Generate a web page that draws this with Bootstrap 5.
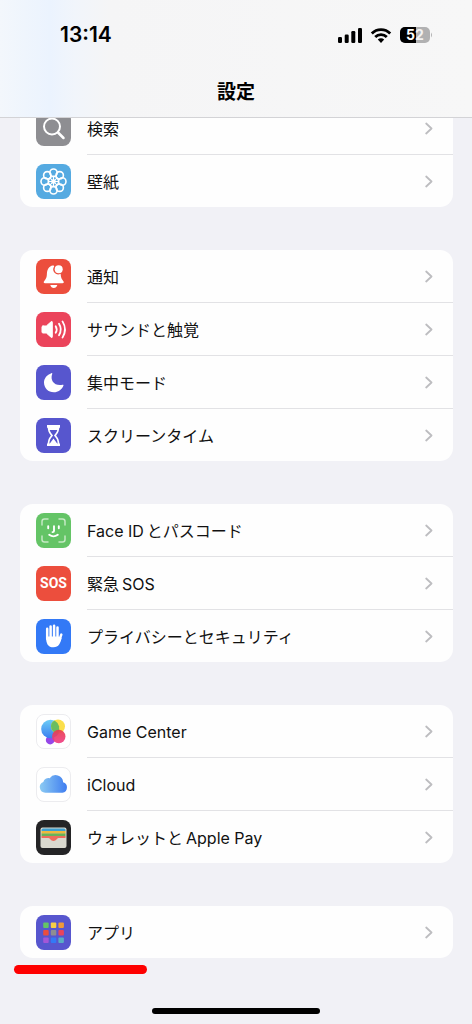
<!DOCTYPE html>
<html lang="ja">
<head>
<meta charset="utf-8">
<meta name="viewport" content="width=device-width, initial-scale=1">
<title>設定</title>
<link href="https://cdn.jsdelivr.net/npm/bootstrap@5.3.0/dist/css/bootstrap.min.css" rel="stylesheet">
<style>
  body { background: #f1f1f6; color: #111; font-family: Inter, "Noto Sans CJK JP", sans-serif; font-size: 16px; line-height: 24px; }
  .top-bar { height: 118px; border-bottom: 1px solid #d3d3d6; background: linear-gradient(90deg, #f3f7fc 0, #ebf3fe 50px, #f1f5fb 75px, #f5f5f6 110px, #f7f7f7 100%); }
  .status-row { height: 70px; padding: 0 40px 0 60px; }
  .clock { font-size: 21px; font-weight: 600; color: #000; }
  .page-title { font-size: 19px; font-weight: 700; line-height: 46px; color: #000; margin: 0; }
  .settings { padding: 102px 19px 65px 20px; display: grid; gap: 43px; }
  .group-box { border-radius: 13px; background: #fefefe; overflow: hidden; }
  .setting-row { padding: 0 0 0 16px; gap: 16px; height: 53px; color: #111; text-decoration: none; }
  .setting-row:last-child { height: 52px; }
  .row-body { align-self: stretch; border-bottom: 1px solid #e2e2e5; padding-right: 20px; }
  .setting-row:last-child .row-body { border-bottom: 0; }
  .label-text { padding-top: 2px; }
  .mixed { display: flex; gap: 3px; }
  .tile { width: 35px; height: 35px; border-radius: 8px; overflow: hidden; flex: none; color: #fff; }
  .tile svg { display: block; width: 35px; height: 35px; }
  .gray { background: #8e8e92; } .sky { background: #55aae1; } .red { background: #ec4e3d; }
  .pink { background: #eb445b; } .indigo { background: #5756ce; } .green { background: #64c466; }
  .blue { background: #3379f6; } .plain { background: #fff; border: 1px solid #ececef; }
  .plain svg { margin: -1px; } .dark { background: #242426; }
  .sos { font: 700 14px/35px "Liberation Sans Narrow", Roboto, sans-serif; text-align: center; }
  .marker { left: 14px; bottom: 49px; width: 133px; height: 9px; background: #fe0000; border-radius: 5px; }
  .home-bar { width: 168px; height: 6px; bottom: 10px; background: #000; border-radius: 3px; }
</style>
</head>
<body>
<svg width="0" height="0" class="position-absolute" aria-hidden="true">
  <symbol id="chev" viewBox="0 0 8 13"><path d="M1.200 1.500 6.500 6.500 1.200 11.500" fill="none" stroke="#bdbdc0" stroke-width="1.800" stroke-linecap="round" stroke-linejoin="round"/></symbol>
</svg>

<header class="top-bar fixed-top">
  <div class="status-row d-flex align-items-center justify-content-between">
    <span class="clock">13:14</span>
    <svg width="94" height="18" viewBox="0 0 94 18" role="img" aria-label="電波 Wi-Fi バッテリー">
      <rect x="0" y="11" width="4" height="6" rx="1.2"/><rect x="6.7" y="8.5" width="4" height="8.5" rx="1.2"/><rect x="13.3" y="5" width="4" height="12" rx="1.2"/><rect x="20" y="2" width="4" height="15" rx="1.2"/>
      <g fill="none" stroke="#000" stroke-width="2.8"><path d="M33.8 7.4a13 13 0 0 1 18.4 0"/><path d="M37.2 11a8.2 8.2 0 0 1 11.600 0"/></g>
      <path d="M39.8 13.600a4.600 4.600 0 0 1 6.400 0L43 16.900z"/>
      <rect x="62" y="1" width="30" height="16" rx="5" fill="#b1b1b2"/><path d="M67 1h11v16H67a5 5 0 0 1-5-5V6a5 5 0 0 1 5-5z"/><path d="M93 6.500q2 2.500 0 5z" fill="#b1b1b2"/>
      <text x="68" y="14" font-size="14" font-weight="700" fill="#fff">5<tspan fill="#f2f2f2">2</tspan></text>
    </svg>
  </div>
  <h1 class="page-title text-center">設定</h1>
</header>

<main class="settings">
  <nav class="group-box" aria-label="検索と壁紙">
    <a href="#search" class="setting-row d-flex align-items-center">
      <span class="tile gray"><svg viewBox="0 0 35 35" fill="none" stroke="#fff" stroke-width="2" stroke-linecap="round"><circle cx="16" cy="15.500" r="8"/><path d="m22 21.500 5.500 5.500" stroke-width="2.500"/></svg></span>
      <span class="row-body d-flex align-items-center justify-content-between flex-fill"><span class="label-text">検索</span><svg width="8" height="13"><use href="#chev"/></svg></span>
    </a>
    <a href="#wallpaper" class="setting-row d-flex align-items-center">
      <span class="tile sky"><svg viewBox="0 0 35 35" fill="none" stroke="#fff" stroke-width="1.600"><circle cx="17.500" cy="8.700" r="3.700"/><circle cx="23.700" cy="11.300" r="3.700"/><circle cx="26.300" cy="17.500" r="3.700"/><circle cx="23.700" cy="23.700" r="3.700"/><circle cx="17.500" cy="26.300" r="3.700"/><circle cx="11.300" cy="23.700" r="3.700"/><circle cx="8.700" cy="17.500" r="3.700"/><circle cx="11.300" cy="11.300" r="3.700"/><circle cx="17.500" cy="17.500" r="5" stroke-width="1.200"/><circle cx="17.500" cy="17.500" r="1.500" fill="#fff"/><path stroke-width="1.100" d="M17.500 12v11M12 17.500h11M13.600 13.600l7.800 7.800M21.400 13.600l-7.800 7.800"/></svg></span>
      <span class="row-body d-flex align-items-center justify-content-between flex-fill"><span class="label-text">壁紙</span><svg width="8" height="13"><use href="#chev"/></svg></span>
    </a>
  </nav>

  <nav class="group-box" aria-label="通知とサウンド">
    <a href="#notifications" class="setting-row d-flex align-items-center">
      <span class="tile red"><svg viewBox="0 0 35 35" fill="#fff"><path d="M16.800 6.400c-3.800.6-5.800 4-5.900 8.200-.1 4.200-1 5.600-2.600 7.300-1 1.100-.8 2.300.8 2.300h17.300c1.600 0 1.800-1.200.8-2.300-1.500-1.600-2.300-3.200-2.600-7.100a5 5 0 0 1-6.400-7.300c0-.8-.5-1.200-1.400-1.100z"/><circle cx="22.700" cy="10.200" r="4"/><path d="M14.300 25.900h7q-.8 3-3.500 3t-3.500-3z"/></svg></span>
      <span class="row-body d-flex align-items-center justify-content-between flex-fill"><span class="label-text">通知</span><svg width="8" height="13"><use href="#chev"/></svg></span>
    </a>
    <a href="#sounds" class="setting-row d-flex align-items-center">
      <span class="tile pink"><svg viewBox="0 0 35 35" fill="none" stroke="#fff" stroke-width="1.800" stroke-linecap="round"><path d="M7 14h3.300l5-4.400q1-.6 1 .6v14.600q0 1.200-1 .6l-5-4.400H7q-1 0-1-1v-5q0-1 1-1z" fill="#fff" stroke-width="1"/><path d="M19.700 14.200q2 3.300 0 6.600M23 11.800q3.600 5.700 0 11.400M26.500 9.400q5 8.100 0 16.200"/></svg></span>
      <span class="row-body d-flex align-items-center justify-content-between flex-fill"><span class="label-text">サウンドと触覚</span><svg width="8" height="13"><use href="#chev"/></svg></span>
    </a>
    <a href="#focus" class="setting-row d-flex align-items-center">
      <span class="tile indigo"><svg viewBox="0 0 35 35" fill="#fff"><path d="M15.400 8.200c.6-.3 1.100.2.800.8-2.400 6.500 2.400 12.500 10.300 10.800.8-.2 1.200.3.900 1-1.700 4-5.300 6.500-9.500 6.500C12.200 27.300 8 23 8 17.500c0-4.200 3-7.900 7.400-9.300z"/></svg></span>
      <span class="row-body d-flex align-items-center justify-content-between flex-fill"><span class="label-text">集中モード</span><svg width="8" height="13"><use href="#chev"/></svg></span>
    </a>
    <a href="#screen-time" class="setting-row d-flex align-items-center">
      <span class="tile indigo"><svg viewBox="0 0 35 35"><path d="M12.500 8.200h10c0 5-1 6-3.500 9.300 2.500 3.300 3.500 4.300 3.500 9.300h-10c0-5 1-6 3.500-9.300-2.500-3.300-3.500-4.300-3.500-9.300z" fill="#5756ce" stroke="#fff" stroke-width="1.700"/><path d="M11 7h13v2.700H11zM11 25.400h13V28H11zM12.500 9h10v3h-10zM17.500 20.500l4 5.500h-8z" fill="#fff"/></svg></span>
      <span class="row-body d-flex align-items-center justify-content-between flex-fill"><span class="label-text">スクリーンタイム</span><svg width="8" height="13"><use href="#chev"/></svg></span>
    </a>
  </nav>

  <nav class="group-box" aria-label="セキュリティ">
    <a href="#face-id" class="setting-row d-flex align-items-center">
      <span class="tile green"><svg viewBox="0 0 35 35" fill="none" stroke="#fff" stroke-linecap="round"><path stroke="#c5e9c4" stroke-width="1.500" d="M6 12V8.500Q6 6 8.500 6H12M23 6h3.500Q29 6 29 8.500V12M29 23v3.500q0 2.500-2.500 2.500H23M12 29H8.500Q6 29 6 26.500V23"/><path stroke-width="1.900" d="M12.200 13.200v2M22.800 13.200v2M18 13.200v4.700q0 1.200-1.500 1.200M13.200 21.800q4.300 3.200 8.600 0"/></svg></span>
      <span class="row-body d-flex align-items-center justify-content-between flex-fill"><span class="label-text mixed"><span>Face ID</span><span>とパスコード</span></span><svg width="8" height="13"><use href="#chev"/></svg></span>
    </a>
    <a href="#sos" class="setting-row d-flex align-items-center">
      <span class="tile red sos">SOS</span>
      <span class="row-body d-flex align-items-center justify-content-between flex-fill"><span class="label-text mixed"><span>緊急</span><span>SOS</span></span><svg width="8" height="13"><use href="#chev"/></svg></span>
    </a>
    <a href="#privacy" class="setting-row d-flex align-items-center">
      <span class="tile blue"><svg viewBox="0 0 35 35"><path d="M11.200 9.800v10M14.600 7.400v12M18.100 6.700v12M21.500 8.500v12M25.300 15.600l-2.300 6.400" fill="none" stroke="#fff" stroke-width="2.500" stroke-linecap="round"/><path d="M10 17.500h12.800l.5 2.500 2.500-1.500c-1.300 5.500-3 9.800-8.300 9.800-5.500 0-7.500-3.500-7.500-10.800z" fill="#fff"/></svg></span>
      <span class="row-body d-flex align-items-center justify-content-between flex-fill"><span class="label-text">プライバシーとセキュリティ</span><svg width="8" height="13"><use href="#chev"/></svg></span>
    </a>
  </nav>

  <nav class="group-box" aria-label="サービス">
    <a href="#game-center" class="setting-row d-flex align-items-center">
      <span class="tile plain"><svg viewBox="0 0 35 35">
        <defs><linearGradient id="gb" x2="0" y2="1"><stop stop-color="#6ccdf6"/><stop offset="1" stop-color="#3a7ef0"/></linearGradient><linearGradient id="gr" x2="0" y2="1"><stop stop-color="#e83d4c"/><stop offset="1" stop-color="#ef3f86"/></linearGradient></defs>
        <circle cx="14.200" cy="26" r="4.400" fill="#9547e8"/><circle cx="14.500" cy="15" r="9.300" fill="url(#gb)"/><circle cx="22" cy="12.500" r="7" fill="#fbdf4a"/><path d="M18.500 6.500A9.300 9.300 0 0 1 22 19.500a7 7 0 0 1-3.500-13z" fill="#69bd60"/><circle cx="22.800" cy="22.500" r="6.700" fill="url(#gr)" opacity=".92"/></svg></span>
      <span class="row-body d-flex align-items-center justify-content-between flex-fill"><span class="label-text">Game Center</span><svg width="8" height="13"><use href="#chev"/></svg></span>
    </a>
    <a href="#icloud" class="setting-row d-flex align-items-center">
      <span class="tile plain"><svg viewBox="0 0 35 35"><defs><linearGradient id="gc"><stop stop-color="#8ccbf3"/><stop offset="1" stop-color="#3f7df0"/></linearGradient></defs><path d="M9.300 25.700a5.600 5.600 0 0 1-2-10.800 5.300 5.300 0 0 1 6.400-3.700 7.400 7.400 0 0 1 13.400 4 5.400 5.400 0 0 1-.7 10.500z" fill="url(#gc)"/></svg></span>
      <span class="row-body d-flex align-items-center justify-content-between flex-fill"><span class="label-text">iCloud</span><svg width="8" height="13"><use href="#chev"/></svg></span>
    </a>
    <a href="#wallet" class="setting-row d-flex align-items-center">
      <span class="tile dark"><svg viewBox="0 0 35 35"><rect x="4.500" y="7.500" width="26" height="20.500" rx="2" fill="#dad9cf"/><path d="M5.500 11V10q0-1.500 1.500-1.500h21q1.500 0 1.500 1.500v1z" fill="#3e9fd0"/><path d="M5.500 11h24v2.700h-24z" fill="#f0b83d"/><path d="M5.500 13.500h24v2.700h-24z" fill="#68b458"/><path d="M5.500 16h24v2h-7c-1.700 0-2 3-5 3s-3.300-3-5-3h-7z" fill="#ee6c5d"/></svg></span>
      <span class="row-body d-flex align-items-center justify-content-between flex-fill"><span class="label-text mixed"><span>ウォレットと</span><span>Apple Pay</span></span><svg width="8" height="13"><use href="#chev"/></svg></span>
    </a>
  </nav>

  <nav class="group-box" aria-label="アプリ">
    <a href="#apps" class="setting-row d-flex align-items-center">
      <span class="tile indigo"><svg viewBox="0 0 35 35"><rect x="7.200" y="7.500" width="5.500" height="5.500" rx="1" fill="#64c466"/><rect x="14.800" y="7.500" width="5.500" height="5.500" rx="1" fill="#f7ce46"/><rect x="22.400" y="7.500" width="5.500" height="5.500" rx="1" fill="#ef9a38"/><rect x="7.200" y="15" width="5.500" height="5.500" rx="1" fill="#ec4e3d"/><rect x="14.800" y="15" width="5.500" height="5.500" rx="1" fill="#8e8e92"/><rect x="22.400" y="15" width="5.500" height="5.500" rx="1" fill="#eb445b"/><rect x="7.200" y="22.500" width="5.500" height="5.500" rx="1" fill="#a357d7"/><rect x="14.800" y="22.500" width="5.500" height="5.500" rx="1" fill="#3379f6"/><rect x="22.400" y="22.500" width="5.500" height="5.500" rx="1" fill="#59adc4"/></svg></span>
      <span class="row-body d-flex align-items-center justify-content-between flex-fill"><span class="label-text">アプリ</span><svg width="8" height="13"><use href="#chev"/></svg></span>
    </a>
  </nav>
</main>
<div class="position-relative"><div class="marker position-absolute"></div></div>
<div class="home-bar position-fixed start-50 translate-middle-x"></div>
<script src="https://cdn.jsdelivr.net/npm/bootstrap@5.3.0/dist/js/bootstrap.bundle.min.js"></script>
</body>
</html>
